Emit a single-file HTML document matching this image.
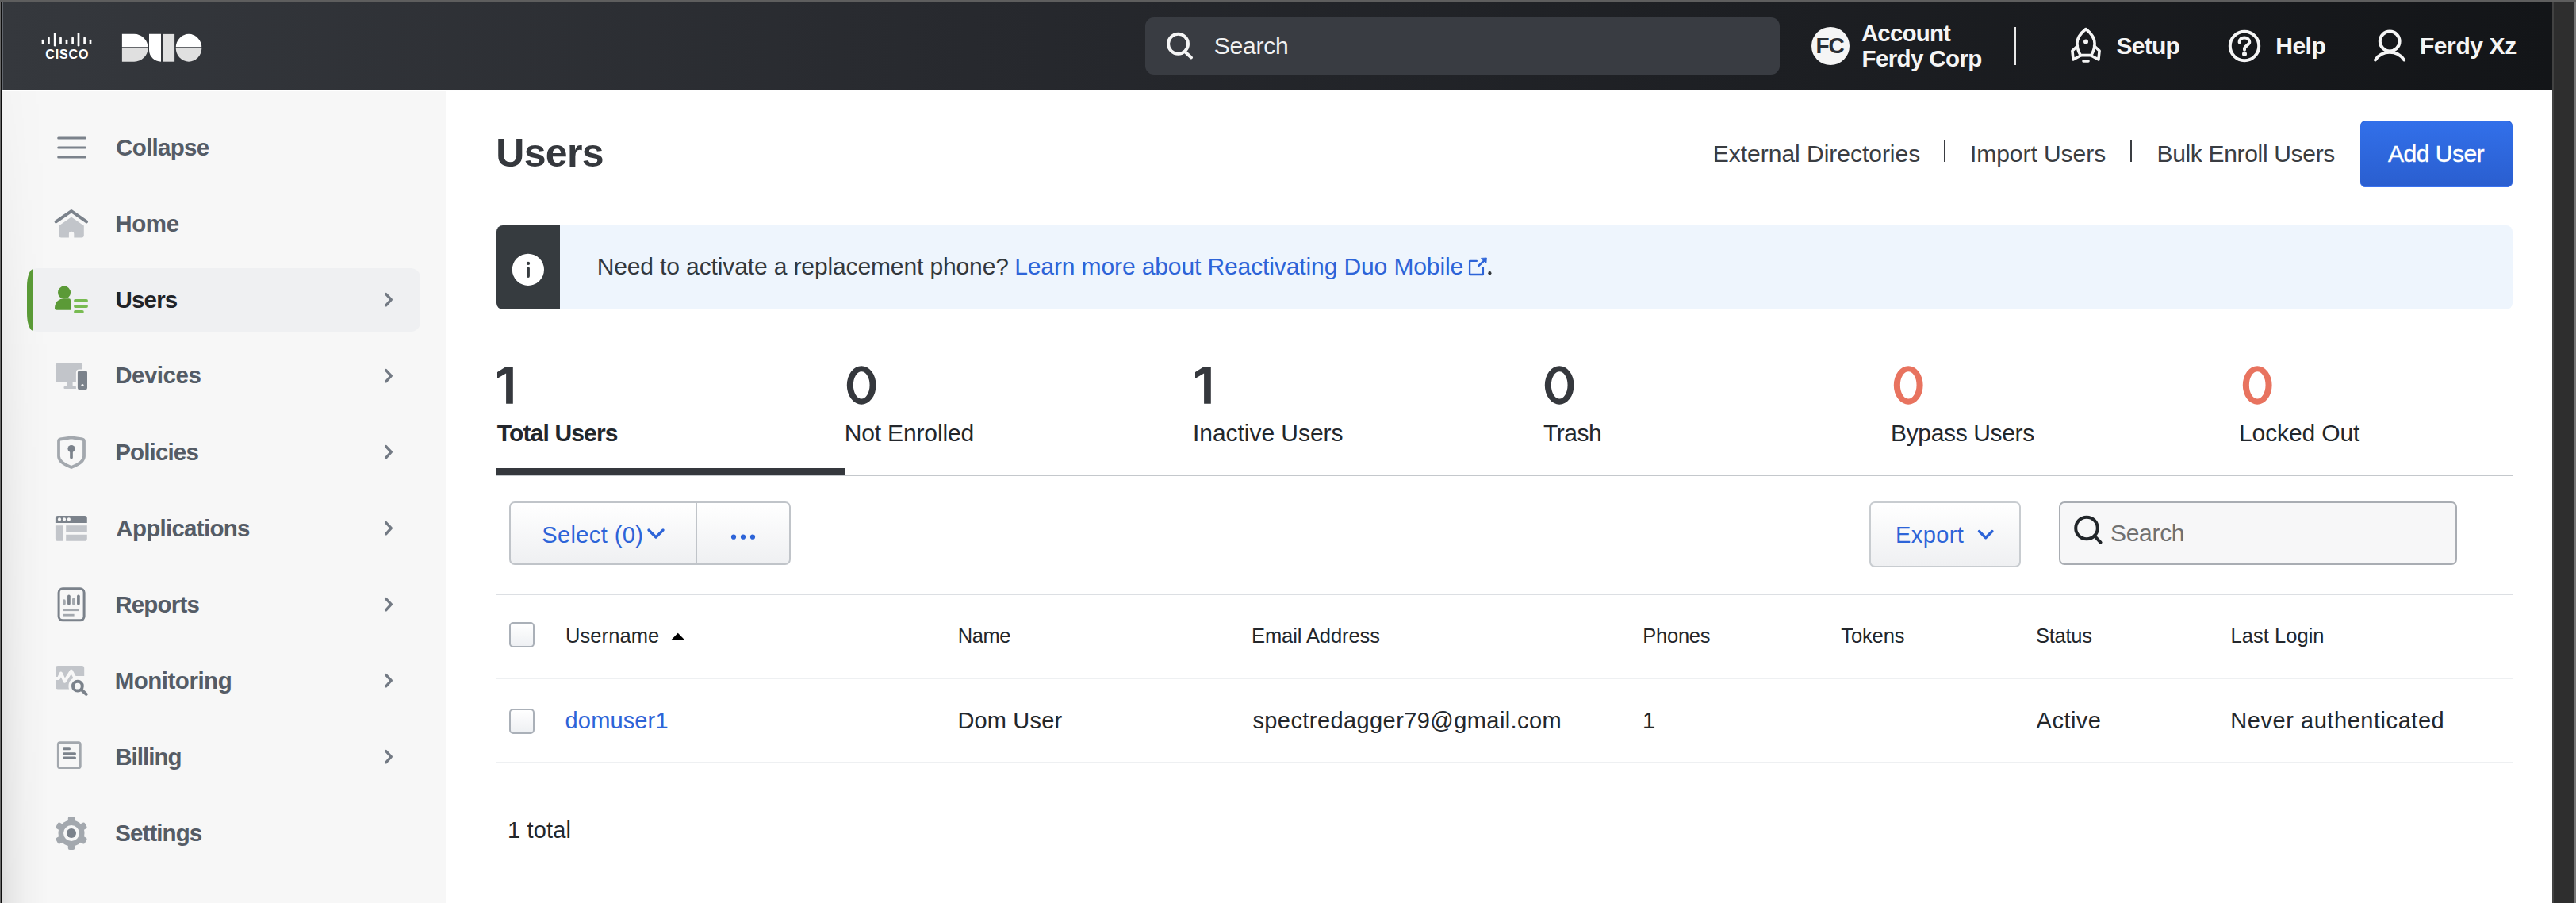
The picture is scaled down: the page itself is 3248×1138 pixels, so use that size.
<!DOCTYPE html><html><head><meta charset="utf-8"><style>
html,body{margin:0;padding:0;}
body{width:3248px;height:1138px;overflow:hidden;position:relative;background:#2e2e2e;font-family:"Liberation Sans", sans-serif;}
.t{position:absolute;white-space:nowrap;font-family:"Liberation Sans", sans-serif;}
</style></head><body>
<div style="position:absolute;left:0px;top:0px;width:3248px;height:2px;background:#5e5e5e"></div>
<div style="position:absolute;left:0px;top:2px;width:1px;height:1136px;background:#6a6a6a"></div>
<div style="position:absolute;left:1px;top:2px;width:1px;height:1136px;background:#0c0c0c"></div>
<div style="position:absolute;left:3218px;top:2px;width:2px;height:1136px;background:#424242"></div>
<div style="position:absolute;left:3220px;top:2px;width:26px;height:1136px;background:#2e2e2e"></div>
<div style="position:absolute;left:3246px;top:2px;width:2px;height:1136px;background:#767676"></div>
<div style="position:absolute;left:2px;top:2px;width:3216px;height:112px;background:linear-gradient(90deg,#35383d 0%,#27292e 38%,#131518 100%)"></div>
<div style="position:absolute;left:2px;top:113px;width:3216px;height:1px;background:rgba(0,0,0,0.18)"></div>
<div style="position:absolute;left:2px;top:2px;width:2px;height:111px;background:#62666d"></div>
<div style="position:absolute;left:2px;top:114px;width:3216px;height:1024px;background:#ffffff"></div>
<div style="position:absolute;left:3px;top:115px;width:559px;height:1023px;background:#f7f7f7"></div>
<div style="position:absolute;left:3px;top:115px;width:67px;height:1023px;background:linear-gradient(90deg,rgba(0,0,0,0.1),rgba(0,0,0,0.06) 12px,rgba(0,0,0,0.025) 30px,rgba(0,0,0,0) 58px);-webkit-mask-image:linear-gradient(180deg,rgba(0,0,0,0.15),rgba(0,0,0,0.6) 40%,#000)"></div>
<svg style="position:absolute;left:50px;top:38px" width="70" height="24" viewBox="0 0 70 24"><line x1="4.00" y1="13.20" x2="4.00" y2="16.50" stroke="#fff" stroke-width="2.7" stroke-linecap="round"/><line x1="11.45" y1="9.70" x2="11.45" y2="16.50" stroke="#fff" stroke-width="2.7" stroke-linecap="round"/><line x1="19.20" y1="4.40" x2="19.20" y2="19.20" stroke="#fff" stroke-width="2.7" stroke-linecap="round"/><line x1="26.50" y1="9.70" x2="26.50" y2="16.50" stroke="#fff" stroke-width="2.7" stroke-linecap="round"/><line x1="34.00" y1="13.20" x2="34.00" y2="16.50" stroke="#fff" stroke-width="2.7" stroke-linecap="round"/><line x1="41.60" y1="9.70" x2="41.60" y2="16.50" stroke="#fff" stroke-width="2.7" stroke-linecap="round"/><line x1="49.00" y1="4.40" x2="49.00" y2="19.20" stroke="#fff" stroke-width="2.7" stroke-linecap="round"/><line x1="56.60" y1="9.70" x2="56.60" y2="16.50" stroke="#fff" stroke-width="2.7" stroke-linecap="round"/><line x1="64.00" y1="13.20" x2="64.00" y2="16.50" stroke="#fff" stroke-width="2.7" stroke-linecap="round"/></svg>
<div class="t" style="left:57.2px;top:60.9px;font-size:16px;line-height:16px;font-weight:700;color:#ffffff;letter-spacing:0.9px;">CISCO</div>
<svg style="position:absolute;left:153px;top:42px" width="104" height="37" viewBox="0 0 104 37"><defs><clipPath id="ct"><rect x="0" y="0" width="102" height="17.2"/></clipPath><clipPath id="cb"><rect x="0" y="19.1" width="102" height="20"/></clipPath></defs>
<g clip-path="url(#ct)"><path d="M0.85 0.87H16.2A17.41 17.41 0 0 1 16.2 35.7H0.85Z" fill="#fff"/><ellipse cx="85" cy="18.28" rx="16.3" ry="17.41" fill="#fff"/></g>
<g clip-path="url(#cb)"><path d="M0.85 0.87H16.2A17.41 17.41 0 0 1 16.2 35.7H0.85Z" fill="#e0e0e0"/><ellipse cx="85" cy="18.28" rx="16.3" ry="17.41" fill="#e0e0e0"/></g>
<path d="M35 0.87H50V35.7A15 15 0 0 1 35 20.7Z" fill="#fff"/>
<rect x="52" y="0.87" width="15.1" height="34.83" fill="#e0e0e0"/></svg>
<div style="position:absolute;left:1444px;top:22px;width:800px;height:72px;background:#393c42;border-radius:11px"></div>
<svg style="position:absolute;left:1465px;top:35px" width="45" height="45" viewBox="0 0 45 45"><circle cx="20.5" cy="20.3" r="12.5" fill="none" stroke="#f5f5f5" stroke-width="4"/><line x1="30" y1="31" x2="37" y2="37.5" stroke="#f5f5f5" stroke-width="4" stroke-linecap="round"/></svg>
<div class="t" style="left:1530.8px;top:43.4px;font-size:30px;line-height:30px;font-weight:400;color:#f2f2f2;letter-spacing:-0.24px;">Search</div>
<div style="position:absolute;left:2284px;top:34px;width:48px;height:48px;background:#f5f5f5;border-radius:50%"></div>
<div class="t" style="left:2289.6px;top:44.1px;font-size:28px;line-height:28px;font-weight:700;color:#2a2d33;letter-spacing:-1.2px;">FC</div>
<div class="t" style="left:2346.9px;top:27.2px;font-size:29.5px;line-height:29.5px;font-weight:700;color:#f5f5f5;letter-spacing:-0.83px;">Account</div>
<div class="t" style="left:2347.5px;top:59.2px;font-size:29.5px;line-height:29.5px;font-weight:700;color:#f5f5f5;letter-spacing:-0.61px;">Ferdy Corp</div>
<div style="position:absolute;left:2540px;top:34px;width:2px;height:48px;background:#e8e8e8"></div>
<svg style="position:absolute;left:2609px;top:33px" width="44" height="48" viewBox="0 0 44 48"><g fill="none" stroke="#f5f5f5" stroke-width="3.6" stroke-linejoin="round" stroke-linecap="round">
<path d="M21 3.5C14 9 9.9 14.5 9.9 22C9.9 28 11.8 32.5 14.3 36.6L27.7 36.6C30.2 32.5 32.1 28 32.1 22C32.1 14.5 28 9 21 3.5Z"/>
<path d="M10.4 25L3.9 31L5.1 42L14.3 37"/>
<path d="M31.6 25L38.1 31L36.9 42L27.7 37"/>
<line x1="18" y1="44" x2="24" y2="44"/></g>
<circle cx="21" cy="19.5" r="3" fill="#f5f5f5"/></svg>
<div class="t" style="left:2668.6px;top:43.0px;font-size:30px;line-height:30px;font-weight:700;color:#f5f5f5;letter-spacing:-0.77px;">Setup</div>
<svg style="position:absolute;left:2809px;top:37px" width="42" height="42" viewBox="0 0 42 42"><circle cx="21" cy="21" r="18.2" fill="none" stroke="#f5f5f5" stroke-width="4"/>
<path d="M14.6 16.2C14.6 12.3 17.5 10.6 20.9 10.6C24.5 10.6 27.3 12.6 27.3 16C27.3 19.6 21 20.6 21 24.6V25.8" fill="none" stroke="#f5f5f5" stroke-width="4" stroke-linecap="round"/>
<circle cx="21" cy="31" r="3" fill="#f5f5f5"/></svg>
<div class="t" style="left:2869.3px;top:42.8px;font-size:30px;line-height:30px;font-weight:700;color:#f5f5f5;letter-spacing:-0.53px;">Help</div>
<svg style="position:absolute;left:2992px;top:37px" width="44" height="44" viewBox="0 0 44 44"><circle cx="21.2" cy="15" r="12.4" fill="none" stroke="#f5f5f5" stroke-width="4"/>
<path d="M3 38.5A21.8 21.8 0 0 1 39.2 38.5" fill="none" stroke="#f5f5f5" stroke-width="4" stroke-linecap="round"/></svg>
<div class="t" style="left:3050.9px;top:42.8px;font-size:30px;line-height:30px;font-weight:700;color:#f5f5f5;letter-spacing:-0.4px;">Ferdy Xz</div>
<div style="position:absolute;left:40px;top:338px;width:490px;height:80px;background:#eff0f2;border-radius:6px 12px 12px 6px"></div>
<div style="position:absolute;left:34px;top:339px;width:8px;height:78px;background:#5a9a36;border-radius:8px 0 0 8px / 22px 0 0 22px"></div>
<svg style="position:absolute;left:70px;top:170px" width="42" height="32" viewBox="0 0 42 32"><line x1="3.7" y1="4" x2="37.5" y2="4" stroke="#7b828b" stroke-width="3" stroke-linecap="round"/><line x1="3.7" y1="16" x2="37.5" y2="16" stroke="#7b828b" stroke-width="3" stroke-linecap="round"/><line x1="3.7" y1="28" x2="37.5" y2="28" stroke="#7b828b" stroke-width="3" stroke-linecap="round"/></svg>
<div class="t" style="left:146.3px;top:171.4px;font-size:29.5px;line-height:29.5px;font-weight:700;color:#555c66;letter-spacing:-0.74px;">Collapse</div>
<svg style="position:absolute;left:62px;top:255px" width="56" height="50" viewBox="0 0 56 50"><path d="M8.6 24.4L28 11.1L47.1 24.4" fill="none" stroke="#7b828b" stroke-width="3.9" stroke-linecap="round" stroke-linejoin="round"/><path d="M28 18.6L43.8 29.4V41.6Q43.8 44.6 40.8 44.6H31.3V39.8Q31.3 36.8 28 36.8Q24.9 36.8 24.9 39.8V44.6H15.2Q12.2 44.6 12.2 41.6V29.4Z" fill="#c2c5ca"/></svg>
<div class="t" style="left:145.2px;top:266.8px;font-size:29.5px;line-height:29.5px;font-weight:700;color:#555c66;letter-spacing:-0.33px;">Home</div>
<svg style="position:absolute;left:60px;top:355px" width="60" height="45" viewBox="0 0 60 45"><circle cx="21.05" cy="13.6" r="8" fill="#5b9a37"/><path d="M9 33.3C9 26 14 21.2 21 21.2H27Q29 21.2 29 23.2V35.8H11.5Q9 35.8 9 33.3Z" fill="#5b9a37"/><line x1="35" y1="24" x2="49" y2="24" stroke="#78bb52" stroke-width="3.9" stroke-linecap="round"/><line x1="35" y1="31" x2="49" y2="31" stroke="#78bb52" stroke-width="3.9" stroke-linecap="round"/><line x1="35" y1="38" x2="43.8" y2="38" stroke="#78bb52" stroke-width="3.9" stroke-linecap="round"/></svg>
<div class="t" style="left:145.4px;top:363.0px;font-size:29.5px;line-height:29.5px;font-weight:700;color:#1f2328;letter-spacing:-0.78px;">Users</div>
<svg style="position:absolute;left:62px;top:450px" width="56" height="45" viewBox="0 0 56 45"><rect x="8" y="7.7" width="34" height="24.3" rx="2.5" fill="#c2c5ca"/><rect x="22.6" y="32" width="7" height="5" fill="#c2c5ca"/><rect x="18.5" y="37" width="15.8" height="3" rx="1" fill="#c2c5ca"/><rect x="34.9" y="16.5" width="14.1" height="25.5" rx="3" fill="#7b828b" stroke="#f7f7f7" stroke-width="2"/><circle cx="42" cy="35.5" r="1.6" fill="#f7f7f7"/></svg>
<div class="t" style="left:145.2px;top:458.4px;font-size:29.5px;line-height:29.5px;font-weight:700;color:#555c66;letter-spacing:-0.48px;">Devices</div>
<svg style="position:absolute;left:62px;top:540px" width="56" height="56" viewBox="0 0 56 56"><path d="M12 16Q12 14 14 13.5L28 11.3L42 13.5Q44 14 44 16V35C44 41 36 46 28 49C20 46 12 41 12 35Z" fill="none" stroke="#a3a8ae" stroke-width="3.8" stroke-linejoin="round"/><circle cx="28" cy="25.6" r="4.6" fill="#7b828b"/><line x1="28" y1="27" x2="28" y2="36.4" stroke="#7b828b" stroke-width="3.7" stroke-linecap="round"/></svg>
<div class="t" style="left:145.2px;top:555.0px;font-size:29.5px;line-height:29.5px;font-weight:700;color:#555c66;letter-spacing:-0.84px;">Policies</div>
<svg style="position:absolute;left:62px;top:640px" width="56" height="50" viewBox="0 0 56 50"><path d="M7.9 13Q7.9 9.9 11 9.9H44.8Q47.8 9.9 47.8 13V18.9H7.9Z" fill="#7b828b"/><circle cx="13" cy="14.4" r="2.1" fill="#f7f7f7"/><circle cx="19" cy="14.4" r="2.1" fill="#f7f7f7"/><circle cx="24.9" cy="14.4" r="2.1" fill="#f7f7f7"/><path d="M7.9 22.2H17.9V41.8H11Q7.9 41.8 7.9 38.7Z" fill="#c2c5ca"/><rect x="21.2" y="22.2" width="26.6" height="7.8" fill="#c2c5ca"/><path d="M21.2 33.7H47.8V38.7Q47.8 41.8 44.7 41.8H21.2Z" fill="#c2c5ca"/></svg>
<div class="t" style="left:146.3px;top:650.9px;font-size:29.5px;line-height:29.5px;font-weight:700;color:#555c66;letter-spacing:-0.72px;">Applications</div>
<svg style="position:absolute;left:62px;top:732px" width="56" height="56" viewBox="0 0 56 56"><rect x="12.1" y="9.8" width="32" height="40" rx="5" fill="none" stroke="#7b828b" stroke-width="3"/><line x1="18.9" y1="25.2" x2="18.9" y2="28.7" stroke="#a3a8ae" stroke-width="3.7" stroke-linecap="round"/><line x1="24.9" y1="19.3" x2="24.9" y2="28.7" stroke="#7b828b" stroke-width="3.7" stroke-linecap="round"/><line x1="30.9" y1="23.2" x2="30.9" y2="28.7" stroke="#a3a8ae" stroke-width="3.7" stroke-linecap="round"/><line x1="36.9" y1="19.3" x2="36.9" y2="28.7" stroke="#7b828b" stroke-width="3.7" stroke-linecap="round"/><line x1="17.5" y1="36.7" x2="37.5" y2="36.7" stroke="#a3a8ae" stroke-width="2.8"/><line x1="17.5" y1="43.2" x2="31.6" y2="43.2" stroke="#a3a8ae" stroke-width="2.8"/></svg>
<div class="t" style="left:145.2px;top:746.8px;font-size:29.5px;line-height:29.5px;font-weight:700;color:#555c66;letter-spacing:-0.8px;">Reports</div>
<svg style="position:absolute;left:62px;top:830px" width="56" height="56" viewBox="0 0 56 56"><rect x="8" y="9" width="36.2" height="29.6" rx="3" fill="#c2c5ca"/><path d="M6 25H11.9L14.9 18.6L19.6 28.6L27.9 15.6L32.3 23.9H46" fill="none" stroke="#f7f7f7" stroke-width="4" stroke-linejoin="round"/><circle cx="35.9" cy="34.7" r="11.5" fill="#f7f7f7"/><rect x="40" y="24" width="10" height="20" fill="#f7f7f7"/><circle cx="35.9" cy="34.7" r="5.9" fill="none" stroke="#7b828b" stroke-width="4"/><line x1="41.8" y1="40.2" x2="46.7" y2="44.9" stroke="#7b828b" stroke-width="4" stroke-linecap="round"/></svg>
<div class="t" style="left:144.7px;top:843.2px;font-size:29.5px;line-height:29.5px;font-weight:700;color:#555c66;letter-spacing:-0.49px;">Monitoring</div>
<svg style="position:absolute;left:62px;top:925px" width="56" height="50" viewBox="0 0 56 50"><rect x="11.3" y="10.7" width="28" height="32" rx="2.5" fill="none" stroke="#a3a8ae" stroke-width="2.8"/><line x1="18.5" y1="18.8" x2="25.5" y2="18.8" stroke="#7b828b" stroke-width="3" stroke-linecap="round"/><line x1="18.5" y1="24.7" x2="32.5" y2="24.7" stroke="#7b828b" stroke-width="3" stroke-linecap="round"/><line x1="18.5" y1="30" x2="32.5" y2="30" stroke="#7b828b" stroke-width="3" stroke-linecap="round"/></svg>
<div class="t" style="left:145.2px;top:938.5px;font-size:29.5px;line-height:29.5px;font-weight:700;color:#555c66;letter-spacing:-0.98px;">Billing</div>
<svg style="position:absolute;left:62px;top:1020px" width="56" height="60" viewBox="0 0 56 60"><rect x="23.8" y="9" width="8.4" height="10" rx="2" fill="#a3a8ae" transform="rotate(0 28 30)"/><rect x="23.8" y="9" width="8.4" height="10" rx="2" fill="#a3a8ae" transform="rotate(60 28 30)"/><rect x="23.8" y="9" width="8.4" height="10" rx="2" fill="#a3a8ae" transform="rotate(120 28 30)"/><rect x="23.8" y="9" width="8.4" height="10" rx="2" fill="#a3a8ae" transform="rotate(180 28 30)"/><rect x="23.8" y="9" width="8.4" height="10" rx="2" fill="#a3a8ae" transform="rotate(240 28 30)"/><rect x="23.8" y="9" width="8.4" height="10" rx="2" fill="#a3a8ae" transform="rotate(300 28 30)"/><circle cx="28" cy="30" r="16.5" fill="#a3a8ae"/><circle cx="28" cy="30" r="10" fill="#f7f7f7"/><circle cx="28" cy="30" r="6" fill="#7b828b"/></svg>
<div class="t" style="left:145.2px;top:1034.5px;font-size:29.5px;line-height:29.5px;font-weight:700;color:#555c66;letter-spacing:-0.9px;">Settings</div>
<svg style="position:absolute;left:480px;top:365px" width="20" height="24" viewBox="0 0 20 24"><path d="M6.7 5.599999999999966L13.3 12.699999999999989L6.7 19.80000000000001" fill="none" stroke="#737a84" stroke-width="3.4" stroke-linecap="round" stroke-linejoin="round"/></svg>
<svg style="position:absolute;left:480px;top:461px" width="20" height="24" viewBox="0 0 20 24"><path d="M6.7 5.599999999999966L13.3 12.699999999999989L6.7 19.80000000000001" fill="none" stroke="#737a84" stroke-width="3.4" stroke-linecap="round" stroke-linejoin="round"/></svg>
<svg style="position:absolute;left:480px;top:557px" width="20" height="24" viewBox="0 0 20 24"><path d="M6.7 5.600000000000023L13.3 12.700000000000045L6.7 19.800000000000068" fill="none" stroke="#737a84" stroke-width="3.4" stroke-linecap="round" stroke-linejoin="round"/></svg>
<svg style="position:absolute;left:480px;top:653px" width="20" height="24" viewBox="0 0 20 24"><path d="M6.7 5.600000000000023L13.3 12.700000000000045L6.7 19.800000000000068" fill="none" stroke="#737a84" stroke-width="3.4" stroke-linecap="round" stroke-linejoin="round"/></svg>
<svg style="position:absolute;left:480px;top:749px" width="20" height="24" viewBox="0 0 20 24"><path d="M6.7 5.600000000000023L13.3 12.700000000000045L6.7 19.800000000000068" fill="none" stroke="#737a84" stroke-width="3.4" stroke-linecap="round" stroke-linejoin="round"/></svg>
<svg style="position:absolute;left:480px;top:845px" width="20" height="24" viewBox="0 0 20 24"><path d="M6.7 5.600000000000023L13.3 12.700000000000045L6.7 19.800000000000068" fill="none" stroke="#737a84" stroke-width="3.4" stroke-linecap="round" stroke-linejoin="round"/></svg>
<svg style="position:absolute;left:480px;top:941px" width="20" height="24" viewBox="0 0 20 24"><path d="M6.7 5.600000000000023L13.3 12.700000000000045L6.7 19.800000000000068" fill="none" stroke="#737a84" stroke-width="3.4" stroke-linecap="round" stroke-linejoin="round"/></svg>
<div class="t" style="left:625.2px;top:167.7px;font-size:50px;line-height:50px;font-weight:700;color:#35383d;letter-spacing:-0.65px;">Users</div>
<div class="t" style="left:2159.8px;top:178.8px;font-size:30px;line-height:30px;font-weight:400;color:#3a3d42;letter-spacing:-0.02px;">External Directories</div>
<div style="position:absolute;left:2451px;top:177px;width:2px;height:27px;background:#3a3d42"></div>
<div class="t" style="left:2484.0px;top:178.8px;font-size:30px;line-height:30px;font-weight:400;color:#3a3d42;letter-spacing:-0.05px;">Import Users</div>
<div style="position:absolute;left:2686px;top:177px;width:2px;height:27px;background:#3a3d42"></div>
<div class="t" style="left:2719.5px;top:178.8px;font-size:30px;line-height:30px;font-weight:400;color:#3a3d42;letter-spacing:-0.33px;">Bulk Enroll Users</div>
<div style="position:absolute;left:2976px;top:152px;width:192px;height:84px;background:linear-gradient(180deg,#3270ea,#2a5ecf);border-radius:7px;box-shadow:inset 0 1px 0 #2a5ed0,inset 0 -1px 0 #3a72f0"></div>
<div class="t" style="left:3011.0px;top:178.8px;font-size:30px;line-height:30px;font-weight:400;color:#ffffff;letter-spacing:-0.5px;-webkit-text-stroke:0.4px #fff;">Add User</div>
<div style="position:absolute;left:626px;top:284px;width:2542px;height:106px;background:#eef5fd;border-radius:8px"></div>
<div style="position:absolute;left:626px;top:284px;width:80px;height:106px;background:#363b3f;border-radius:8px 0 0 8px"></div>
<svg style="position:absolute;left:645px;top:319px" width="42" height="42" viewBox="0 0 42 42"><circle cx="20.9" cy="20.8" r="20.1" fill="#fff"/><circle cx="21" cy="12.9" r="2.15" fill="#363b3f"/><line x1="21" y1="19.2" x2="21" y2="29" stroke="#363b3f" stroke-width="3.8" stroke-linecap="round"/></svg>
<div class="t" style="left:752.7px;top:320.9px;font-size:30px;line-height:30px;font-weight:400;color:#33383d;letter-spacing:-0.125px;">Need to activate a replacement phone?</div>
<div class="t" style="left:1279.2px;top:320.9px;font-size:30px;line-height:30px;font-weight:400;color:#2d64d8;letter-spacing:-0.11px;">Learn more about Reactivating Duo Mobile</div>
<svg style="position:absolute;left:1850px;top:322px" width="34" height="28" viewBox="0 0 34 28"><path d="M11.9 6.9H3.1V24H19.9V15.1" fill="none" stroke="#2d64d8" stroke-width="2.3" stroke-linecap="round" stroke-linejoin="round"/><line x1="14.6" y1="12.7" x2="21" y2="6.8" stroke="#2d64d8" stroke-width="2.6" stroke-linecap="round"/><path d="M17.5 3.4L24.4 3L23.9 9.9Z" fill="#2d64d8" stroke="#2d64d8" stroke-width="0.8" stroke-linejoin="round"/><circle cx="28.4" cy="22.2" r="2.1" fill="#33383d"/></svg>
<svg style="position:absolute;left:620px;top:455px" width="40" height="60" viewBox="0 0 40 60"><path d="M7 14L18.1 7H26.8V53.7H18.1V15.5L7 22.1Z" fill="#35383d"/></svg>
<div class="t" style="left:626.7px;top:531.1px;font-size:30px;line-height:30px;font-weight:700;color:#23272c;letter-spacing:-0.84px;">Total Users</div>
<svg style="position:absolute;left:1060px;top:455px" width="50" height="60" viewBox="0 0 50 60"><path d="M26.2 6.2A18.4 24.25 0 1 1 26.2 54.7A18.4 24.25 0 1 1 26.2 6.2ZM26.2 13.2A10.35 17.15 0 1 0 26.2 47.5A10.35 17.15 0 1 0 26.2 13.2Z" fill="#35383d" fill-rule="evenodd"/></svg>
<div class="t" style="left:1064.7px;top:531.1px;font-size:30px;line-height:30px;font-weight:400;color:#23272c;letter-spacing:-0.15px;">Not Enrolled</div>
<svg style="position:absolute;left:1500px;top:455px" width="40" height="60" viewBox="0 0 40 60"><path d="M7 14L18.1 7H26.8V53.7H18.1V15.5L7 22.1Z" fill="#35383d"/></svg>
<div class="t" style="left:1504.0px;top:531.1px;font-size:30px;line-height:30px;font-weight:400;color:#23272c;letter-spacing:-0.04px;">Inactive Users</div>
<svg style="position:absolute;left:1940px;top:455px" width="50" height="60" viewBox="0 0 50 60"><path d="M26.2 6.2A18.4 24.25 0 1 1 26.2 54.7A18.4 24.25 0 1 1 26.2 6.2ZM26.2 13.2A10.35 17.15 0 1 0 26.2 47.5A10.35 17.15 0 1 0 26.2 13.2Z" fill="#35383d" fill-rule="evenodd"/></svg>
<div class="t" style="left:1946.0px;top:531.1px;font-size:30px;line-height:30px;font-weight:400;color:#23272c;letter-spacing:-0.5px;">Trash</div>
<svg style="position:absolute;left:2380px;top:455px" width="50" height="60" viewBox="0 0 50 60"><path d="M26.2 6.2A18.4 24.25 0 1 1 26.2 54.7A18.4 24.25 0 1 1 26.2 6.2ZM26.2 13.2A10.35 17.15 0 1 0 26.2 47.5A10.35 17.15 0 1 0 26.2 13.2Z" fill="#e8735f" fill-rule="evenodd"/></svg>
<div class="t" style="left:2384.0px;top:531.1px;font-size:30px;line-height:30px;font-weight:400;color:#23272c;letter-spacing:-0.35px;">Bypass Users</div>
<svg style="position:absolute;left:2820px;top:455px" width="50" height="60" viewBox="0 0 50 60"><path d="M26.2 6.2A18.4 24.25 0 1 1 26.2 54.7A18.4 24.25 0 1 1 26.2 6.2ZM26.2 13.2A10.35 17.15 0 1 0 26.2 47.5A10.35 17.15 0 1 0 26.2 13.2Z" fill="#e8735f" fill-rule="evenodd"/></svg>
<div class="t" style="left:2823.0px;top:531.1px;font-size:30px;line-height:30px;font-weight:400;color:#23272c;letter-spacing:-0.11px;">Locked Out</div>
<div style="position:absolute;left:626px;top:598px;width:2542px;height:2px;background:#c4c8cc"></div>
<div style="position:absolute;left:626px;top:590px;width:440px;height:8px;background:#35383d"></div>
<div style="position:absolute;left:642px;top:632px;width:355px;height:80px;border:2px solid #c0c4c9;border-radius:7px;box-sizing:border-box;background:linear-gradient(180deg,#ffffff,#eff0f2)"></div>
<div style="position:absolute;left:877px;top:633px;width:2px;height:78px;background:#c0c4c9"></div>
<div class="t" style="left:683.2px;top:660.2px;font-size:29px;line-height:29px;font-weight:400;color:#2d64d8;letter-spacing:0.4px;">Select (0)</div>
<svg style="position:absolute;left:812px;top:660px" width="30" height="24" viewBox="0 0 30 24"><path d="M6 8L15 17L24 8" fill="none" stroke="#2d64d8" stroke-width="3.4" stroke-linecap="round" stroke-linejoin="round"/></svg>
<svg style="position:absolute;left:915px;top:668px" width="45" height="18" viewBox="0 0 45 18"><circle cx="10" cy="8.7" r="3.1" fill="#2d64d8"/><circle cx="22" cy="8.7" r="3.1" fill="#2d64d8"/><circle cx="34" cy="8.7" r="3.1" fill="#2d64d8"/></svg>
<div style="position:absolute;left:2357px;top:632px;width:191px;height:83px;border:2px solid #c8ccd0;border-radius:7px;box-sizing:border-box;background:linear-gradient(180deg,#ffffff,#eff0f2)"></div>
<div class="t" style="left:2390.0px;top:660.2px;font-size:29px;line-height:29px;font-weight:400;color:#2d64d8;letter-spacing:0.4px;">Export</div>
<svg style="position:absolute;left:2490px;top:662px" width="28" height="24" viewBox="0 0 28 24"><path d="M5.5 7.5L13.7 15.7L21.9 7.5" fill="none" stroke="#2d64d8" stroke-width="3.4" stroke-linecap="round" stroke-linejoin="round"/></svg>
<div style="position:absolute;left:2596px;top:632px;width:502px;height:80px;border:2px solid #a9adb3;border-radius:7px;box-sizing:border-box;background:#f7f7f8"></div>
<svg style="position:absolute;left:2610px;top:645px" width="45" height="45" viewBox="0 0 45 45"><circle cx="21" cy="20.5" r="13.8" fill="none" stroke="#22262a" stroke-width="4"/><line x1="30.8" y1="30.3" x2="38.6" y2="38.6" stroke="#22262a" stroke-width="4" stroke-linecap="round"/></svg>
<div class="t" style="left:2661.0px;top:656.6px;font-size:30px;line-height:30px;font-weight:400;color:#707070;letter-spacing:-0.3px;">Search</div>
<div style="position:absolute;left:626px;top:748px;width:2542px;height:2px;background:#dcdfe3"></div>
<div style="position:absolute;left:642px;top:784px;width:32px;height:32px;border:2px solid #aab0b8;border-radius:5px;box-sizing:border-box;background:linear-gradient(180deg,#ffffff,#eef0f3)"></div>
<div class="t" style="left:712.9px;top:788.9px;font-size:25.5px;line-height:25.5px;font-weight:400;color:#23272c;letter-spacing:0.11px;">Username</div>
<svg style="position:absolute;left:844px;top:794px" width="22" height="16" viewBox="0 0 22 16"><path d="M2.7 12H18.8L10.75 3.8Z" fill="#000"/></svg>
<div class="t" style="left:1207.7px;top:788.9px;font-size:25.5px;line-height:25.5px;font-weight:400;color:#23272c;letter-spacing:-0.43px;">Name</div>
<div class="t" style="left:1578.0px;top:788.9px;font-size:25.5px;line-height:25.5px;font-weight:400;color:#23272c;letter-spacing:-0.09px;">Email Address</div>
<div class="t" style="left:2071.3px;top:788.9px;font-size:25.5px;line-height:25.5px;font-weight:400;color:#23272c;letter-spacing:-0.25px;">Phones</div>
<div class="t" style="left:2321.3px;top:788.9px;font-size:25.5px;line-height:25.5px;font-weight:400;color:#23272c;letter-spacing:-0.13px;">Tokens</div>
<div class="t" style="left:2566.9px;top:788.9px;font-size:25.5px;line-height:25.5px;font-weight:400;color:#23272c;letter-spacing:-0.22px;">Status</div>
<div class="t" style="left:2812.6px;top:788.9px;font-size:25.5px;line-height:25.5px;font-weight:400;color:#23272c;letter-spacing:0.03px;">Last Login</div>
<div style="position:absolute;left:626px;top:854px;width:2542px;height:2px;background:#eef0f2"></div>
<div style="position:absolute;left:642px;top:893px;width:32px;height:32px;border:2px solid #aab0b8;border-radius:5px;box-sizing:border-box;background:linear-gradient(180deg,#ffffff,#eef0f3)"></div>
<div class="t" style="left:712.6px;top:893.7px;font-size:29px;line-height:29px;font-weight:400;color:#2d64d8;letter-spacing:0.14px;">domuser1</div>
<div class="t" style="left:1207.4px;top:893.7px;font-size:29px;line-height:29px;font-weight:400;color:#23272c;letter-spacing:0.17px;">Dom User</div>
<div class="t" style="left:1579.4px;top:893.7px;font-size:29px;line-height:29px;font-weight:400;color:#23272c;letter-spacing:0.42px;">spectredagger79@gmail.com</div>
<div class="t" style="left:2071.0px;top:893.7px;font-size:29px;line-height:29px;font-weight:400;color:#23272c;letter-spacing:0px;">1</div>
<div class="t" style="left:2567.6px;top:893.7px;font-size:29px;line-height:29px;font-weight:400;color:#23272c;letter-spacing:0.48px;">Active</div>
<div class="t" style="left:2812.3px;top:893.7px;font-size:29px;line-height:29px;font-weight:400;color:#23272c;letter-spacing:0.55px;">Never authenticated</div>
<div style="position:absolute;left:626px;top:960px;width:2542px;height:2px;background:#eef0f2"></div>
<div class="t" style="left:640.0px;top:1031.9px;font-size:29px;line-height:29px;font-weight:400;color:#23272c;letter-spacing:0.15px;">1 total</div>
</body></html>
